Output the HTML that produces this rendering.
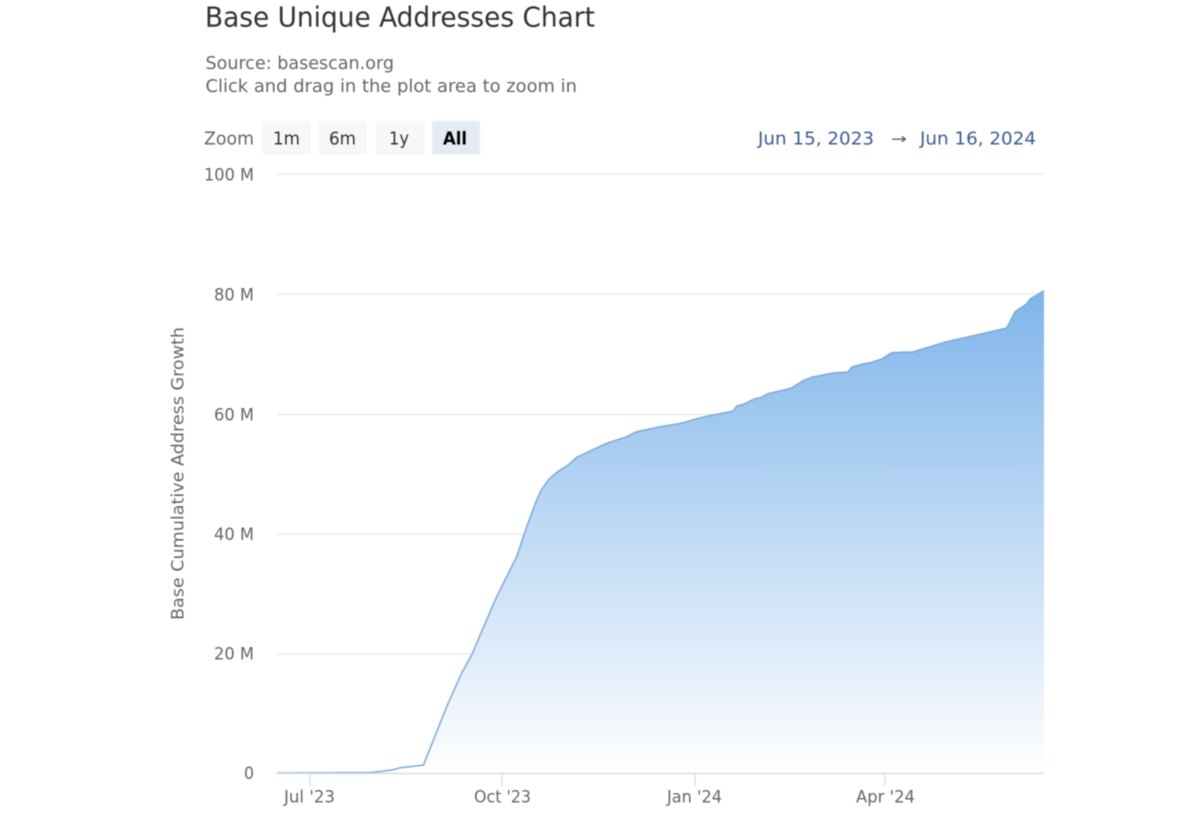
<!DOCTYPE html>
<html>
<head>
<meta charset="utf-8">
<style>
html,body{margin:0;padding:0;background:#fff;width:1200px;height:815px;overflow:hidden}
svg{display:block;filter:blur(.5px)}
text{font-family:"DejaVu Sans","Liberation Sans",sans-serif;fill:#666}
</style>
</head>
<body>
<svg width="1200" height="815" viewBox="0 0 1200 815" xmlns="http://www.w3.org/2000/svg">
<defs>
<linearGradient id="g" gradientUnits="userSpaceOnUse" x1="0" y1="290" x2="0" y2="773">
<stop offset="0" stop-color="#7fb5ea"/>
<stop offset="1" stop-color="#ffffff"/>
</linearGradient>
</defs>
<rect width="1200" height="815" fill="#fff"/>

<text x="205" y="26.500" font-size="27.500" textLength="390" lengthAdjust="spacingAndGlyphs" style="fill:#333">Base Unique Addresses Chart</text>
<text x="205.500" y="69" font-size="17.500" textLength="188.500" lengthAdjust="spacingAndGlyphs">Source: basescan.org</text>
<text x="205.500" y="92" font-size="17.500" textLength="371.500" lengthAdjust="spacingAndGlyphs">Click and drag in the plot area to zoom in</text>

<text x="204" y="144.500" font-size="17.500" textLength="50" lengthAdjust="spacingAndGlyphs">Zoom</text>
<rect x="262" y="121" width="49" height="33.500" rx="2" fill="#f6f7f8"/>
<rect x="319" y="121" width="48" height="33.500" rx="2" fill="#f6f7f8"/>
<rect x="376" y="121" width="48" height="33.500" rx="2" fill="#f6f7f8"/>
<rect x="432" y="121" width="48" height="33.500" rx="2" fill="#e5ebf4"/>
<text x="273" y="144.500" font-size="17.500" textLength="27" lengthAdjust="spacingAndGlyphs" style="fill:#333">1m</text>
<text x="329" y="144.500" font-size="17.500" textLength="27" lengthAdjust="spacingAndGlyphs" style="fill:#333">6m</text>
<text x="389" y="144.500" font-size="17.500" textLength="20" lengthAdjust="spacingAndGlyphs" style="fill:#333">1y</text>
<text x="443" y="144.500" font-size="17.500" font-weight="700" textLength="24" lengthAdjust="spacingAndGlyphs" style="fill:#000">All</text>

<text x="758" y="144.500" font-size="17.500" textLength="116" lengthAdjust="spacingAndGlyphs" style="fill:#3e5c97">Jun 15, 2023</text>
<text x="891" y="143.500" font-size="14" textLength="16" lengthAdjust="spacingAndGlyphs" style="fill:#555">→</text>
<text x="920" y="144.500" font-size="17.500" textLength="116" lengthAdjust="spacingAndGlyphs" style="fill:#3e5c97">Jun 16, 2024</text>

<g stroke="#e6e6e6" stroke-width="1.300" fill="none">
<path d="M277 174H1044"/>
<path d="M277 294H1044"/>
<path d="M277 414.500H1044"/>
<path d="M277 534H1044"/>
<path d="M277 654H1044"/>
</g>

<text x="204" y="180.500" font-size="17" textLength="50" lengthAdjust="spacingAndGlyphs">100 M</text>
<text x="214" y="300.500" font-size="17" textLength="40" lengthAdjust="spacingAndGlyphs">80 M</text>
<text x="214" y="420.500" font-size="17" textLength="40" lengthAdjust="spacingAndGlyphs">60 M</text>
<text x="214" y="540" font-size="17" textLength="40" lengthAdjust="spacingAndGlyphs">40 M</text>
<text x="214" y="659.500" font-size="17" textLength="40" lengthAdjust="spacingAndGlyphs">20 M</text>
<text x="244" y="779" font-size="17" textLength="10" lengthAdjust="spacingAndGlyphs">0</text>

<text transform="translate(183.500 620) rotate(-90)" font-size="17" textLength="293" lengthAdjust="spacingAndGlyphs">Base Cumulative Address Growth</text>

<path fill="url(#g)" d="M277 773L370 772.500L381 771.500L392 770L400 767.800L412 766.500L423.500 765L446.700 706.700L461.700 673L471.700 655L484 626L496.700 596.700L508 574L516.700 556.700L526.700 526.700L536.700 500L541 490.500L548.300 480L553 475.500L560 470L567 466L573 460.700L576.700 457.300L590 451L606.700 443.300L626.700 436.700L636.700 431.700L645 430L660 426.700L680 423.500L700 418L710 415.700L733.300 411L736.700 406L743 404.500L748 402L755 398.700L761 397.500L768 393.700L780 391L791.700 388L803 380.700L813 377L833 373L848 372L852 367L863 364L872 362.200L882 359L888 355L891.700 352.700L902 352.300L913 352L930 346.700L946.700 341.700L976.700 335L1006.700 328L1010 321.700L1015 311.700L1026.700 304L1030 299L1037 295L1044 290.700V773Z"/>
<path fill="none" stroke="#7aa9d8" stroke-width="1.500" stroke-linejoin="round" d="M277 773L370 772.500L381 771.500L392 770L400 767.800L412 766.500L423.500 765L446.700 706.700L461.700 673L471.700 655L484 626L496.700 596.700L508 574L516.700 556.700L526.700 526.700L536.700 500L541 490.500L548.300 480L553 475.500L560 470L567 466L573 460.700L576.700 457.300L590 451L606.700 443.300L626.700 436.700L636.700 431.700L645 430L660 426.700L680 423.500L700 418L710 415.700L733.300 411L736.700 406L743 404.500L748 402L755 398.700L761 397.500L768 393.700L780 391L791.700 388L803 380.700L813 377L833 373L848 372L852 367L863 364L872 362.200L882 359L888 355L891.700 352.700L902 352.300L913 352L930 346.700L946.700 341.700L976.700 335L1006.700 328L1010 321.700L1015 311.700L1026.700 304L1030 299L1037 295L1044 290.700"/>

<path d="M277 773.500H1044" stroke="#d8dde3" stroke-width="1.600" fill="none"/>
<g stroke="#dcdfe4" stroke-width="1.400" fill="none">
<path d="M310 774V786"/>
<path d="M502 774V786"/>
<path d="M695 774V786"/>
<path d="M885 774V786"/>
</g>

<text x="284" y="802.500" font-size="16.500" textLength="51" lengthAdjust="spacingAndGlyphs">Jul '23</text>
<text x="474" y="802.500" font-size="16.500" textLength="57" lengthAdjust="spacingAndGlyphs">Oct '23</text>
<text x="667" y="802.500" font-size="16.500" textLength="55" lengthAdjust="spacingAndGlyphs">Jan '24</text>
<text x="856" y="802.500" font-size="16.500" textLength="59" lengthAdjust="spacingAndGlyphs">Apr '24</text>
</svg>
</body>
</html>
